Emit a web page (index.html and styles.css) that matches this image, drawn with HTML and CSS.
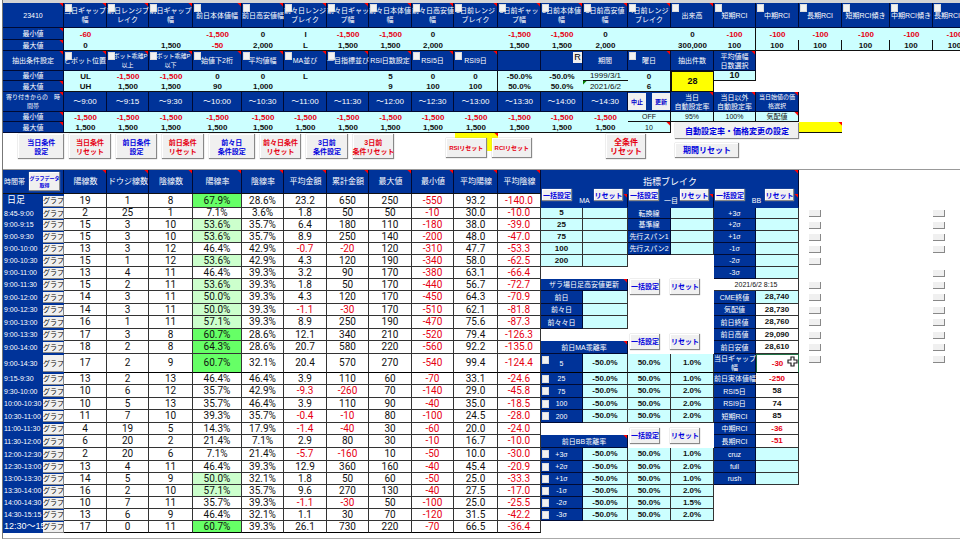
FILE: index.html
```html
<!DOCTYPE html>
<html lang="ja">
    <head>
        <meta charset="utf-8">
        <title>23410</title>
        <link rel="stylesheet" href="styles.css">
    </head>
    <body>
        <main class="sheet">
            <!-- search conditions -->
            <table class="grid conditions">
                <colgroup>
                    <col class="c61"><col class="c43"><col class="c42"><col class="c44"><col class="c49"><col class="c42"><col class="c43"><col class="c42"><col class="c43"><col class="c42"><col class="c44"><col class="c43"><col class="c42"><col class="c45"><col class="c43"><col class="c43"><col class="c42"><col class="c43"><col class="c43"><col class="c48"><col class="c43"><col class="c43">
                </colgroup>
                <tr class="h25">
                    <th class="note">23410</th>
                    <th class="note"><label><input type="checkbox">当日ギャップ<br>幅</label></th>
                    <th class="note"><label><input type="checkbox">前日レンジブ<br>レイク</label></th>
                    <th class="note"><label><input type="checkbox">前日ギャップ<br>幅</label></th>
                    <th class="note"><label><input type="checkbox">前日本体値幅</label></th>
                    <th class="note"><label><input type="checkbox">前日高安値幅</label></th>
                    <th class="note"><label><input type="checkbox">前々日レンジ<br>ブレイク</label></th>
                    <th class="note"><label><input type="checkbox">前々日ギャッ<br>プ幅</label></th>
                    <th class="note"><label><input type="checkbox">前々日本体値<br>幅</label></th>
                    <th class="note"><label><input type="checkbox">前々日高安値<br>幅</label></th>
                    <th class="note"><label><input type="checkbox">3日前レンジ<br>ブレイク</label></th>
                    <th class="note"><label><input type="checkbox">3日前ギャッ<br>プ幅</label></th>
                    <th class="note"><label><input type="checkbox">3日前本体値<br>幅</label></th>
                    <th class="note"><label><input type="checkbox">3日前高安値<br>幅</label></th>
                    <th class="note"><label><input type="checkbox">4日前レンジ<br>ブレイク</label></th>
                    <th class="note"><label><input type="checkbox">出来高</label></th>
                    <th><label><input type="checkbox">短期RCI</label></th>
                    <th><label><input type="checkbox">中期RCI</label></th>
                    <th><label><input type="checkbox">長期RCI</label></th>
                    <th><label><input type="checkbox">短期RCI傾き</label></th>
                    <th><label><input type="checkbox">中期RCI傾き</label></th>
                    <th><label><input type="checkbox">長期RCI傾き</label></th>
                </tr>
                <tr class="min h12">
                    <th class="note">最小値</th>
                    <td class="neg">-60</td><td></td><td></td><td class="neg">-1,500</td><td>0</td><td>I</td>
                    <td class="neg">-1,500</td><td class="neg">-1,500</td><td>0</td><td></td>
                    <td class="neg">-1,500</td><td class="neg">-1,500</td><td>0</td><td></td><td>0</td>
                    <td class="neg edge">-100</td><td class="neg">-100</td><td class="neg">-100</td><td class="neg">-100</td><td class="neg">-100</td><td class="neg">-100</td>
                </tr>
                <tr class="max h11">
                    <th class="note">最大値</th>
                    <td>0</td><td></td><td>1,500</td><td class="neg">-50</td><td>2,000</td><td>L</td>
                    <td>1,500</td><td>1,500</td><td>2,000</td><td></td>
                    <td>1,500</td><td>1,500</td><td>2,000</td><td></td><td>300,000</td>
                    <td class="edge">100</td><td class="edge">100</td><td class="edge">100</td><td class="edge">100</td><td class="edge">100</td><td>100</td>
                </tr>
                <tr class="h20">
                    <th class="note">抽出条件設定</th>
                    <th class="note"><label><input type="checkbox">ピボット位置</label></th>
                    <th class="tight note"><label><input type="checkbox">ピボット乖離P<br>以上</label></th>
                    <th class="tight note"><label><input type="checkbox">ピボット乖離P<br>以下</label></th>
                    <th class="note"><label><input type="checkbox">始値下2桁</label></th>
                    <th class="note"><label><input type="checkbox">平均値幅</label></th>
                    <th class="note"><label><input type="checkbox">MA並び</label></th>
                    <th class="note"><label><input type="checkbox">一目指標並び</label></th>
                    <th class="note">RSI日数設定</th>
                    <th class="note"><label><input type="checkbox">RSI5日</label></th>
                    <th class="note"><label><input type="checkbox">RSI9日</label></th>
                    <th></th>
                    <th><button class="mark">R</button></th>
                    <th>期間</th>
                    <th class="note"><label><input type="checkbox">曜日</label></th>
                    <th>抽出件数</th>
                    <th class="note">平均値幅<br>日数選択</th>
                    <td class="gap" colspan="5"></td>
                </tr>
                <tr class="min h10">
                    <th>最小値</th>
                    <td>UL</td><td class="neg">-1,500</td><td class="neg">-1,500</td><td>0</td><td>0</td><td>L</td><td></td>
                    <td>5</td><td>0</td><td class="edge">0</td><td>-50.0%</td><td>-50.0%</td><td class="date underline">1999/3/1</td><td class="edge">0</td>
                    <td class="count" rowspan="2">28</td><td class="edge underline big">10</td><td class="gap" colspan="5"></td>
                </tr>
                <tr class="max h11">
                    <th class="note">最大値</th>
                    <td>UH</td><td>1,500</td><td>1,500</td><td>90</td><td>1,000</td><td></td><td></td>
                    <td>9</td><td>100</td><td class="edge">100</td><td>50.0%</td><td>50.0%</td><td class="date warn">2021/6/2</td><td class="edge">6</td>
                    <td class="gap" colspan="6"></td>
                </tr>
                <tr class="times h20">
                    <th class="tight note">寄り付きからの　時<br>間帯</th>
                    <th>～9:00</th><th>～9:15</th><th>～9:30</th><th>～10:00</th><th>～10:30</th><th>～11:00</th><th>～11:30</th><th>～12:00</th><th>～12:30</th><th>～13:00</th><th>～13:30</th><th>～14:00</th><th>～14:30</th>
                    <th><div class="switch"><button>中止</button><button>更新</button></div></th>
                    <th class="small note">当日<br>自動設定率</th>
                    <th class="small note">当日以外<br>自動設定率</th>
                    <th class="tight note">当日始値の価<br>格選択</th>
                    <td class="gap" colspan="4"></td>
                </tr>
                <tr class="min h10">
                    <th class="note">最小値</th>
                    <td class="neg">-1,500</td><td class="neg">-1,500</td><td class="neg">-1,500</td><td class="neg">-1,500</td><td class="neg">-1,500</td><td class="neg">-1,500</td><td class="neg">-1,500</td><td class="neg">-1,500</td><td class="neg">-1,500</td><td class="neg">-1,500</td><td class="neg">-1,500</td><td class="neg">-1,500</td><td class="neg">-1,500</td>
                    <td class="light edge underline">OFF</td><td class="light edge underline">95%</td><td class="light edge underline">100%</td><td class="light edge underline note">気配値</td><td class="gap" colspan="4"></td>
                </tr>
                <tr class="max h11">
                    <th class="note">最大値</th>
                    <td>1,500</td><td>1,500</td><td>1,500</td><td>1,500</td><td>1,500</td><td>1,500</td><td>1,500</td><td>1,500</td><td>1,500</td><td>1,500</td><td>1,500</td><td>1,500</td><td>1,500</td>
                    <td class="light edge note">10</td>
                    <td class="gap" colspan="3"><button class="btn rate">自動設定率・価格変更の設定</button></td>
                    <td class="yellow note"></td><td class="gap" colspan="3"></td>
                </tr>
            </table>

            <div class="toolbar">
                <div class="group days">
                    <button class="btn wide">当日条件<br>設定</button>
                    <button class="btn red">当日条件<br>リセット</button>
                    <button class="btn">前日条件<br>設定</button>
                    <button class="btn red">前日条件<br>リセット</button>
                    <button class="btn wide">前々日<br>条件設定</button>
                    <button class="btn red">前々日条件<br>リセット</button>
                    <button class="btn">3日前<br>条件設定</button>
                    <button class="btn red">3日前<br>条件リセット</button>
                </div>
                <div class="group index">
                    <button class="btn red">RSIリセット</button>
                    <button class="btn red">RCIリセット</button>
                </div>
                <button class="btn red all">全条件<br>リセット</button>
                <button class="btn period">期間リセット</button>
            </div>

            <!-- results by time zone, indicators on the right -->
            <table class="grid results">
                <colgroup>
                    <col class="c40"><col class="c21"><col class="c43"><col class="c42"><col class="c44"><col class="c49"><col class="c42"><col class="c43"><col class="c42"><col class="c43"><col class="c42"><col class="c44"><col class="c43"><col class="c42"><col class="c45"><col class="c43"><col class="c43"><col class="c42"><col class="c43"><col class="c43"><col class="c48"><col class="c43"><col class="c43">
                </colgroup>
                <tr class="head h24">
                    <th colspan="2"><div class="zone">時間帯<button class="btn">グラフデータ<br>取得</button></div></th>
                    <th class="note">陽線数</th><th class="note">ドウジ線数</th><th class="note">陰線数</th><th class="note">陽線率</th><th class="note">陰線率</th><th class="note">平均金額</th><th class="note">累計金額</th><th class="note">最大値</th><th class="note">最小値</th><th class="note">平均陽線</th><th class="note">平均陰線</th>
                    <th class="title note" colspan="6">指標ブレイク</th>
                    <td class="gap" colspan="4"></td>
                </tr>
                <tr class="h14">
                    <th class="day">日足</th><td class="graph"><button>グラフ</button></td>
                    <td>19</td><td>1</td><td>8</td><td class="high">67.9%</td><td>28.6%</td><td>23.2</td><td>650</td><td>250</td><td class="neg">-550</td><td>93.2</td><td class="neg">-140.0</td>
                    <th class="sub note" colspan="2">MA<button class="btn set">一括設定</button><button class="btn reset">リセット</button></th>
                    <th class="sub note" colspan="2">一目<button class="btn set">一括設定</button><button class="btn reset">リセット</button></th>
                    <th class="sub note" colspan="2">BB<button class="btn set">一括設定</button><button class="btn reset">リセット</button></th>
                    <td class="gap" colspan="4"></td>
                </tr>
                <tr class="h11">
                    <th>8:45-9:00</th><td class="graph"><button>グラフ</button></td>
                    <td>2</td><td>25</td><td>1</td><td>7.1%</td><td>3.6%</td><td>1.8</td><td>50</td><td>50</td><td class="neg">-10</td><td>30.0</td><td class="neg">-10.0</td>
                    <td class="val">5</td><td class="val"></td><td class="key">転換線</td><td class="val"></td><td class="key">+3σ</td><td class="val"></td>
                    <td class="gap near"><button></button></td><td class="gap" colspan="2"></td><td class="gap"><button></button></td>
                </tr>
                <tr>
                    <th>9:00-9:15</th><td class="graph"><button>グラフ</button></td>
                    <td>15</td><td>3</td><td>10</td><td class="mid">53.6%</td><td>35.7%</td><td>6.4</td><td>180</td><td>110</td><td class="neg">-180</td><td>38.0</td><td class="neg">-39.0</td>
                    <td class="val">25</td><td class="val"></td><td class="key">基準線</td><td class="val"></td><td class="key">+2σ</td><td class="val"></td>
                    <td class="gap near"><button></button></td><td class="gap" colspan="2"></td><td class="gap"><button></button></td>
                </tr>
                <tr>
                    <th>9:00-9:30</th><td class="graph"><button>グラフ</button></td>
                    <td>15</td><td>3</td><td>10</td><td class="mid">53.6%</td><td>35.7%</td><td>8.9</td><td>250</td><td>140</td><td class="neg">-200</td><td>48.0</td><td class="neg">-47.0</td>
                    <td class="val">75</td><td class="val"></td><td class="key">先行スパン1</td><td class="val"></td><td class="key">+1σ</td><td class="val"></td>
                    <td class="gap near"><button></button></td><td class="gap" colspan="2"></td><td class="gap"><button></button></td>
                </tr>
                <tr>
                    <th>9:00-10:00</th><td class="graph"><button>グラフ</button></td>
                    <td>13</td><td>3</td><td>12</td><td>46.4%</td><td>42.9%</td><td class="neg">-0.7</td><td class="neg">-20</td><td>120</td><td class="neg">-310</td><td>47.7</td><td class="neg">-53.3</td>
                    <td class="val">100</td><td class="val"></td><td class="key">先行スパン2</td><td class="val"></td><td class="key">-1σ</td><td class="val"></td>
                    <td class="gap near"><button></button></td><td class="gap" colspan="2"></td><td class="gap"><button></button></td>
                </tr>
                <tr>
                    <th>9:00-10:30</th><td class="graph"><button>グラフ</button></td>
                    <td>15</td><td>1</td><td>12</td><td class="mid">53.6%</td><td>42.9%</td><td>4.3</td><td>120</td><td>190</td><td class="neg">-340</td><td>58.0</td><td class="neg">-62.5</td>
                    <td class="val">200</td><td class="val"></td><td class="gap" colspan="2"></td><td class="key">-2σ</td><td class="val"></td>
                    <td class="gap near"><button></button></td><td class="gap" colspan="3"></td>
                </tr>
                <tr>
                    <th>9:00-11:00</th><td class="graph"><button>グラフ</button></td>
                    <td>13</td><td>4</td><td>11</td><td>46.4%</td><td>39.3%</td><td>3.2</td><td>90</td><td>170</td><td class="neg">-380</td><td>63.1</td><td class="neg">-66.4</td>
                    <td class="gap" colspan="4"></td><td class="key">-3σ</td><td class="val"></td>
                    <td class="gap" colspan="3"></td><td class="gap"><button></button></td>
                </tr>
                <tr>
                    <th>9:00-11:30</th><td class="graph"><button>グラフ</button></td>
                    <td>15</td><td>2</td><td>11</td><td class="mid">53.6%</td><td>39.3%</td><td>1.8</td><td>50</td><td>170</td><td class="neg">-440</td><td>56.7</td><td class="neg">-72.7</td>
                    <td class="key note" colspan="2">ザラ場日足高安値更新</td><td class="gap pair" colspan="2" rowspan="4"><div><button class="btn">一括設定</button><button class="btn">リセット</button></div></td><td class="stamp" colspan="2">2021/6/2 8:15</td>
                    <td class="gap near"><button></button></td><td class="gap" colspan="2"></td><td class="gap"><button></button></td>
                </tr>
                <tr class="h13">
                    <th>9:00-12:00</th><td class="graph"><button>グラフ</button></td>
                    <td>14</td><td>3</td><td>11</td><td class="mid">50.0%</td><td>39.3%</td><td>4.3</td><td>120</td><td>170</td><td class="neg">-450</td><td>64.3</td><td class="neg">-70.9</td>
                    <td class="key">前日</td><td class="val"></td><td class="key">CME終値</td><td class="val">28,740</td>
                    <td class="gap near"><button></button></td><td class="gap" colspan="2"></td><td class="gap"><button></button></td>
                </tr>
                <tr>
                    <th>9:00-12:30</th><td class="graph"><button>グラフ</button></td>
                    <td>14</td><td>3</td><td>11</td><td class="mid">50.0%</td><td>39.3%</td><td class="neg">-1.1</td><td class="neg">-30</td><td>170</td><td class="neg">-510</td><td>62.1</td><td class="neg">-81.8</td>
                    <td class="key">前々日</td><td class="val"></td><td class="key">気配値</td><td class="plain">28,730</td>
                    <td class="gap near"><button></button></td><td class="gap" colspan="2"></td><td class="gap"><button></button></td>
                </tr>
                <tr class="h13">
                    <th>9:00-13:00</th><td class="graph"><button>グラフ</button></td>
                    <td>16</td><td>1</td><td>11</td><td class="mid">57.1%</td><td>39.3%</td><td>8.9</td><td>250</td><td>190</td><td class="neg">-470</td><td>75.6</td><td class="neg">-87.3</td>
                    <td class="key">前々々日</td><td class="val"></td><td class="key">前日終値</td><td class="plain">28,760</td>
                    <td class="gap near"><button></button></td><td class="gap" colspan="2"></td><td class="gap"><button></button></td>
                </tr>
                <tr>
                    <th>9:00-13:30</th><td class="graph"><button>グラフ</button></td>
                    <td>17</td><td>3</td><td>8</td><td class="high">60.7%</td><td>28.6%</td><td>12.1</td><td>340</td><td>210</td><td class="neg">-520</td><td>79.4</td><td class="neg">-126.3</td>
                    <td class="gap" colspan="2"></td><td class="gap pair low" colspan="2" rowspan="2"><div><button class="btn">一括設定</button><button class="btn">リセット</button></div></td><td class="key">前日高値</td><td class="plain">29,090</td>
                    <td class="gap near"><button></button></td><td class="gap" colspan="2"></td><td class="gap"><button></button></td>
                </tr>
                <tr class="h13">
                    <th>9:00-14:00</th><td class="graph"><button>グラフ</button></td>
                    <td>18</td><td>2</td><td>8</td><td class="high">64.3%</td><td>28.6%</td><td>20.7</td><td>580</td><td>220</td><td class="neg">-560</td><td>92.2</td><td class="neg">-135.0</td>
                    <td class="key note" colspan="2">前日MA乖離率</td><td class="key">前日安値</td><td class="plain">28,610</td>
                    <td class="gap near"><button></button></td><td class="gap" colspan="2"></td><td class="gap"><button></button></td>
                </tr>
                <tr class="last h19">
                    <th>9:00-14:30</th><td class="graph"><button>グラフ</button></td>
                    <td>17</td><td>2</td><td>9</td><td class="high">60.7%</td><td>32.1%</td><td>20.4</td><td>570</td><td>270</td><td class="neg">-540</td><td>99.4</td><td class="neg">-124.4</td>
                    <td class="key"><label><input type="checkbox">5</label></td><td class="val">-50.0%</td><td class="val">50.0%</td><td class="val">1.0%</td><td class="key">当日ギャップ<br>幅</td>
                    <td class="plain neg selected">-30<svg class="cursor" viewBox="0 0 11 11"><path d="M4 1h3v3h3v3h-3v3h-3v-3h-3v-3h3z" fill="#fff" stroke="#222" stroke-width="1.2"/></svg></td>
                    <td class="gap near top"><button></button></td><td class="gap" colspan="2"></td><td class="gap top"><button></button></td>
                </tr>
                <tr>
                    <th>9:15-9:30</th><td class="graph"><button>グラフ</button></td>
                    <td>13</td><td>2</td><td>13</td><td>46.4%</td><td>46.4%</td><td>3.9</td><td>110</td><td>60</td><td class="neg">-70</td><td>33.1</td><td class="neg">-24.6</td>
                    <td class="key"><label><input type="checkbox">25</label></td><td class="val">-50.0%</td><td class="val">50.0%</td><td class="val">1.0%</td><td class="key">前日実体値幅</td><td class="plain neg">-250</td>
                </tr>
                <tr class="h13">
                    <th>9:30-10:00</th><td class="graph"><button>グラフ</button></td>
                    <td>10</td><td>6</td><td>12</td><td>35.7%</td><td>42.9%</td><td class="neg">-9.3</td><td class="neg">-260</td><td>70</td><td class="neg">-140</td><td>29.0</td><td class="neg">-45.8</td>
                    <td class="key"><label><input type="checkbox">75</label></td><td class="val">-50.0%</td><td class="val">50.0%</td><td class="val">2.0%</td><td class="key">RSI5日</td><td class="plain">58</td>
                </tr>
                <tr>
                    <th>10:00-10:30</th><td class="graph"><button>グラフ</button></td>
                    <td>10</td><td>5</td><td>13</td><td>35.7%</td><td>46.4%</td><td>3.9</td><td>110</td><td>90</td><td class="neg">-40</td><td>35.0</td><td class="neg">-18.5</td>
                    <td class="key"><label><input type="checkbox">100</label></td><td class="val">-50.0%</td><td class="val">50.0%</td><td class="val">2.0%</td><td class="key">RSI9日</td><td class="plain">74</td>
                </tr>
                <tr class="h13">
                    <th>10:30-11:00</th><td class="graph"><button>グラフ</button></td>
                    <td>11</td><td>7</td><td>10</td><td>39.3%</td><td>35.7%</td><td class="neg">-0.4</td><td class="neg">-10</td><td>80</td><td class="neg">-100</td><td>24.5</td><td class="neg">-28.0</td>
                    <td class="key"><label><input type="checkbox">200</label></td><td class="val">-50.0%</td><td class="val">50.0%</td><td class="val">2.0%</td><td class="key">短期RCI</td><td class="plain">85</td>
                </tr>
                <tr>
                    <th>11:00-11:30</th><td class="graph"><button>グラフ</button></td>
                    <td>4</td><td>19</td><td>5</td><td>14.3%</td><td>17.9%</td><td class="neg">-1.4</td><td class="neg">-40</td><td>30</td><td class="neg">-60</td><td>20.0</td><td class="neg">-24.0</td>
                    <td class="gap" colspan="2"></td><td class="gap pair low" colspan="2" rowspan="2"><div><button class="btn">一括設定</button><button class="btn">リセット</button></div></td><td class="key">中期RCI</td><td class="plain neg">-36</td>
                </tr>
                <tr class="h13">
                    <th>11:30-12:00</th><td class="graph"><button>グラフ</button></td>
                    <td>6</td><td>20</td><td>2</td><td>21.4%</td><td>7.1%</td><td>2.9</td><td>80</td><td>30</td><td class="neg">-10</td><td>16.7</td><td class="neg">-10.0</td>
                    <td class="key note" colspan="2">前日BB乖離率</td><td class="key">長期RCI</td><td class="plain neg">-51</td>
                </tr>
                <tr class="h13">
                    <th>12:00-12:30</th><td class="graph"><button>グラフ</button></td>
                    <td>2</td><td>20</td><td>6</td><td>7.1%</td><td>21.4%</td><td class="neg">-5.7</td><td class="neg">-160</td><td>10</td><td class="neg">-50</td><td>10.0</td><td class="neg">-30.0</td>
                    <td class="key"><label><input type="checkbox">+3σ</label></td><td class="val">-50.0%</td><td class="val">50.0%</td><td class="val">1.0%</td><td class="key">cruz</td><td class="val"></td>
                </tr>
                <tr>
                    <th>12:30-13:00</th><td class="graph"><button>グラフ</button></td>
                    <td>13</td><td>4</td><td>11</td><td>46.4%</td><td>39.3%</td><td>12.9</td><td>360</td><td>160</td><td class="neg">-40</td><td>45.4</td><td class="neg">-20.9</td>
                    <td class="key"><label><input type="checkbox">+2σ</label></td><td class="val">-50.0%</td><td class="val">50.0%</td><td class="val">2.0%</td><td class="key">full</td><td class="val"></td>
                </tr>
                <tr>
                    <th>13:00-13:30</th><td class="graph"><button>グラフ</button></td>
                    <td>14</td><td>5</td><td>9</td><td class="mid">50.0%</td><td>32.1%</td><td>1.8</td><td>50</td><td>60</td><td class="neg">-50</td><td>25.0</td><td class="neg">-33.3</td>
                    <td class="key"><label><input type="checkbox">+1σ</label></td><td class="val">-50.0%</td><td class="val">50.0%</td><td class="val">1.0%</td><td class="key">rush</td><td class="val"></td>
                </tr>
                <tr>
                    <th>13:30-14:00</th><td class="graph"><button>グラフ</button></td>
                    <td>16</td><td>2</td><td>10</td><td class="mid">57.1%</td><td>35.7%</td><td>9.6</td><td>270</td><td>130</td><td class="neg">-40</td><td>27.5</td><td class="neg">-17.0</td>
                    <td class="key"><label><input type="checkbox">-1σ</label></td><td class="val">-50.0%</td><td class="val">50.0%</td><td class="val">2.0%</td>
                </tr>
                <tr>
                    <th>14:00-14:30</th><td class="graph"><button>グラフ</button></td>
                    <td>10</td><td>7</td><td>11</td><td>35.7%</td><td>39.3%</td><td class="neg">-1.1</td><td class="neg">-30</td><td>50</td><td class="neg">-100</td><td>25.0</td><td class="neg">-25.5</td>
                    <td class="key"><label><input type="checkbox">-2σ</label></td><td class="val">-50.0%</td><td class="val">50.0%</td><td class="val">1.5%</td>
                </tr>
                <tr>
                    <th>14:30-15:15</th><td class="graph"><button>グラフ</button></td>
                    <td>13</td><td>6</td><td>9</td><td>46.4%</td><td>32.1%</td><td>1.1</td><td>30</td><td>70</td><td class="neg">-120</td><td>31.5</td><td class="neg">-42.2</td>
                    <td class="key"><label><input type="checkbox">-3σ</label></td><td class="val">-50.0%</td><td class="val">50.0%</td><td class="val">2.0%</td>
                </tr>
                <tr class="last">
                    <th class="rest">12:30～15</th><td class="graph"><button>グラフ</button></td>
                    <td>17</td><td>0</td><td>11</td><td class="high">60.7%</td><td>39.3%</td><td>26.1</td><td>730</td><td>220</td><td class="neg">-70</td><td>66.5</td><td class="neg">-36.4</td>
                </tr>
            </table>
        </main>
    </body>
</html>
```
FILE: styles.css
```css
* {
    box-sizing: border-box;
}
body {
    margin: 0;
    background: #fff;
    font-family: "Liberation Sans", "Noto Sans CJK JP", sans-serif;
    color: #111;
    overflow-x: hidden;
}
.sheet {
    margin-left: 2px;
    border-left: 1px solid #777;
    border-bottom: 1px solid #aaa;
    padding-bottom: 5px;
    overflow: hidden;
}
button {
    display: block;
    margin: 0;
    padding: 0;
    border: none;
    font-family: inherit;
    white-space: nowrap;
    background: #f0f0f0;
    cursor: pointer;
}
input[type=checkbox] {
    appearance: none;
    position: absolute;
    margin: 0;
    width: 7px;
    height: 8px;
    background: #f2f2f2;
    border: 1px solid #ddd;
}

/* Sheet grid: the column widths are shares of the window */
.grid {
    table-layout: fixed;
    width: calc(100% + 16px);
    border-collapse: separate;
    border-spacing: 0;
    text-align: center;
}
.c21 { width: 21px; }
.c40 { width: 40px; }
.c42 { width: 42px; }
.c43 { width: 43px; }
.c44 { width: 44px; }
.c45 { width: 45px; }
.c48 { width: 48px; }
.c49 { width: 49px; }
.c61 { width: 61px; }
.h10 { height: 10px; }
.h11 { height: 11px; }
.h12 { height: 12px; }
.h13 { height: 13px; }
.h14 { height: 14px; }
.h19 { height: 19px; }
.h20 { height: 20px; }
.h24 { height: 24px; }
.h25 { height: 25px; }

.grid th, .grid td {
    position: relative;
    padding: 0;
    white-space: nowrap;
    vertical-align: middle;
}
.grid th, .grid .key {
    background-color: #003399;
    color: #fff;
    font-size: 7px;
    line-height: 9px;
    font-weight: normal;
    border-right: 1px solid #000a33;
    border-bottom: 1px solid #000a33;
}
/* Comment mark in the corner of a cell */
.grid .note {
    background-image: linear-gradient(225deg, #f00 2px, transparent 3px);
}
.grid .warn {
    background-image: linear-gradient(135deg, #008000 2px, transparent 3px);
}
.grid .neg {
    color: #e60012;
}
.grid .gap {
    background: #fff;
    border: none;
}

/* Conditions */
.conditions {
    border-top: 3px solid #d4d4d4;
}
.conditions td {
    background-color: #ccffff;
    font-size: 8px;
    line-height: 9px;
    font-weight: bold;
}
.conditions .max td {
    border-bottom: 1px solid #111;
}
.conditions .max .gap {
    border: none;
}
.conditions th input {
    top: 1px;
    left: 1px;
}
.conditions .edge {
    border-right: 1px solid #111;
}
.conditions .underline {
    border-bottom: 1px solid #111;
}
.conditions .date, .conditions .light {
    font-weight: normal;
}
.conditions .light {
    font-size: 7px;
}
.conditions .big {
    font-size: 9px;
}
.conditions .count {
    background: #ff0;
    font-size: 9px;
    border: 1px solid #111;
}
.conditions .times th {
    font-size: 8px;
}
.conditions .times .small {
    font-size: 7px;
}
.conditions .tight, .conditions .times .tight {
    font-size: 6px;
}
.conditions .yellow {
    background-color: #ff0;
    border: none;
}
.mark {
    position: absolute;
    top: 1px;
    right: 0;
    width: 9px;
    height: 11px;
    font-size: 9px;
    line-height: 11px;
}
.switch {
    display: flex;
    justify-content: space-between;
}
.switch button {
    width: 18px;
    height: 17px;
    font-size: 6px;
    font-weight: bold;
    color: #0000cc;
}

/* Raised buttons */
.btn {
    font-size: 8px;
    line-height: 9px;
    font-weight: bold;
    color: #0000dd;
    box-shadow: inset -1px -1px #888, inset 1px 1px #fff, 0 0 1px #999;
}
.btn.red {
    color: #e60012;
}
.rate {
    position: absolute;
    top: 1px;
    left: 4px;
    right: 0;
}

.toolbar {
    display: grid;
    grid-template-columns: 15fr 376fr 52fr 86fr 74fr 40fr 29fr 64fr 221fr;
    align-items: start;
    height: 36px;
    padding-top: 1px;
}
.group {
    display: flex;
    gap: 5px;
    min-width: 0;
}
.group .btn {
    flex: 42 1 0;
    min-width: 0;
}
.group .btn.wide {
    flex-grow: 47;
}
.days {
    grid-column: 2;
}
.days .btn {
    height: 25px;
    font-size: 7px;
}
.index {
    grid-column: 4;
    position: relative;
    padding-top: 4px;
}
/* Yellow cell behind the RSI button */
.index::before {
    content: "";
    position: absolute;
    top: -1px;
    left: 10%;
    width: 50%;
    height: 18px;
    background: linear-gradient(225deg, #f00 2px, transparent 3px), #ff0;
}
.index .btn {
    position: relative;
    height: 20px;
    font-size: 6px;
}
.all {
    grid-column: 6;
    height: 25px;
}
.period {
    grid-column: 8;
    height: 15px;
    margin-top: 9px;
}

/* Results */
.results {
    border-top: 1px solid #999;
}
.results tr:not([class]), .results tr.last:not(.h19) {
    height: 12px;
}
.results td {
    font-family: Roboto, "Noto Sans CJK JP", sans-serif;
    font-size: 10px;
    line-height: 10px;
    border-right: 1px solid #333;
    border-bottom: 1px solid #333;
}
.results th {
    font-size: 7px;
    text-align: left;
    padding-left: 1px;
    border-right: none;
    border-bottom-color: #003399;
}
.results .head th {
    font-size: 8px;
    text-align: center;
    border-right: 1px solid #000a33;
    border-bottom: 1px solid #111;
}
.results .head .title {
    font-size: 9px;
    border-bottom: none;
}
.results .sub {
    text-align: center;
    border-right: 1px solid #000a33;
}
.results .day, .results .rest {
    font-size: 9px;
}
.results .day {
    padding-left: 4px;
}
.results .rest {
    overflow: hidden;
}
.results .last td {
    border-bottom-color: #000;
}
.results .high {
    background: #66ff66;
}
.results .mid {
    background: #ccffcc;
}
.results .graph {
    background: #003399;
    border: none;
}
.graph button {
    width: 100%;
    height: 11px;
    font-size: 7px;
    line-height: 10px;
    box-shadow: inset -1px -1px #888;
}
.h19 .graph button {
    height: 17px;
}
.zone {
    display: flex;
    align-items: center;
    justify-content: space-between;
    padding-right: 3px;
    font-size: 7px;
}
.zone .btn {
    width: 31px;
    height: 19px;
    font-size: 5px;
    line-height: 7px;
}
.results .key {
    font-family: "Liberation Sans", "Noto Sans CJK JP", sans-serif;
    font-size: 7px;
    line-height: 9px;
}
.key label {
    display: block;
}
.key input {
    top: 2px;
    left: 1px;
}
.results .val, .results .plain {
    font-family: "Liberation Sans", sans-serif;
    font-size: 8px;
    font-weight: bold;
}
.results .val {
    background: #ccffff;
}
.results .stamp {
    font-family: "Liberation Sans", sans-serif;
    font-size: 7px;
}
.results .selected {
    border: 1px solid #217346;
}
.cursor {
    position: absolute;
    top: 1px;
    right: 0;
    width: 11px;
    height: 11px;
}
.results .gap {
    border: none;
}
.gap > button {
    width: 12px;
    height: 7px;
    box-shadow: inset -1px -1px #888;
}
.gap > .rate {
    width: auto;
    height: 16px;
    box-shadow: inset -1px -1px #888, 0 0 1px #999;
}
.results .near {
    padding-left: 10px;
}
.results .top {
    vertical-align: top;
    padding-top: 2px;
}

/* Buttons floating over the sheet */
.set, .reset {
    position: absolute;
    top: -5px;
    height: 12px;
    font-size: 7px;
}
.set {
    left: 1px;
    width: 30px;
}
.reset {
    right: 4px;
    width: 29px;
}
.pair div {
    position: absolute;
    z-index: 1;
    top: 0;
    left: 2px;
    display: flex;
    gap: 10px;
}
.pair.low div {
    top: 5px;
}
.pair .btn {
    width: 30px;
    height: 16px;
    font-size: 7px;
}
```
